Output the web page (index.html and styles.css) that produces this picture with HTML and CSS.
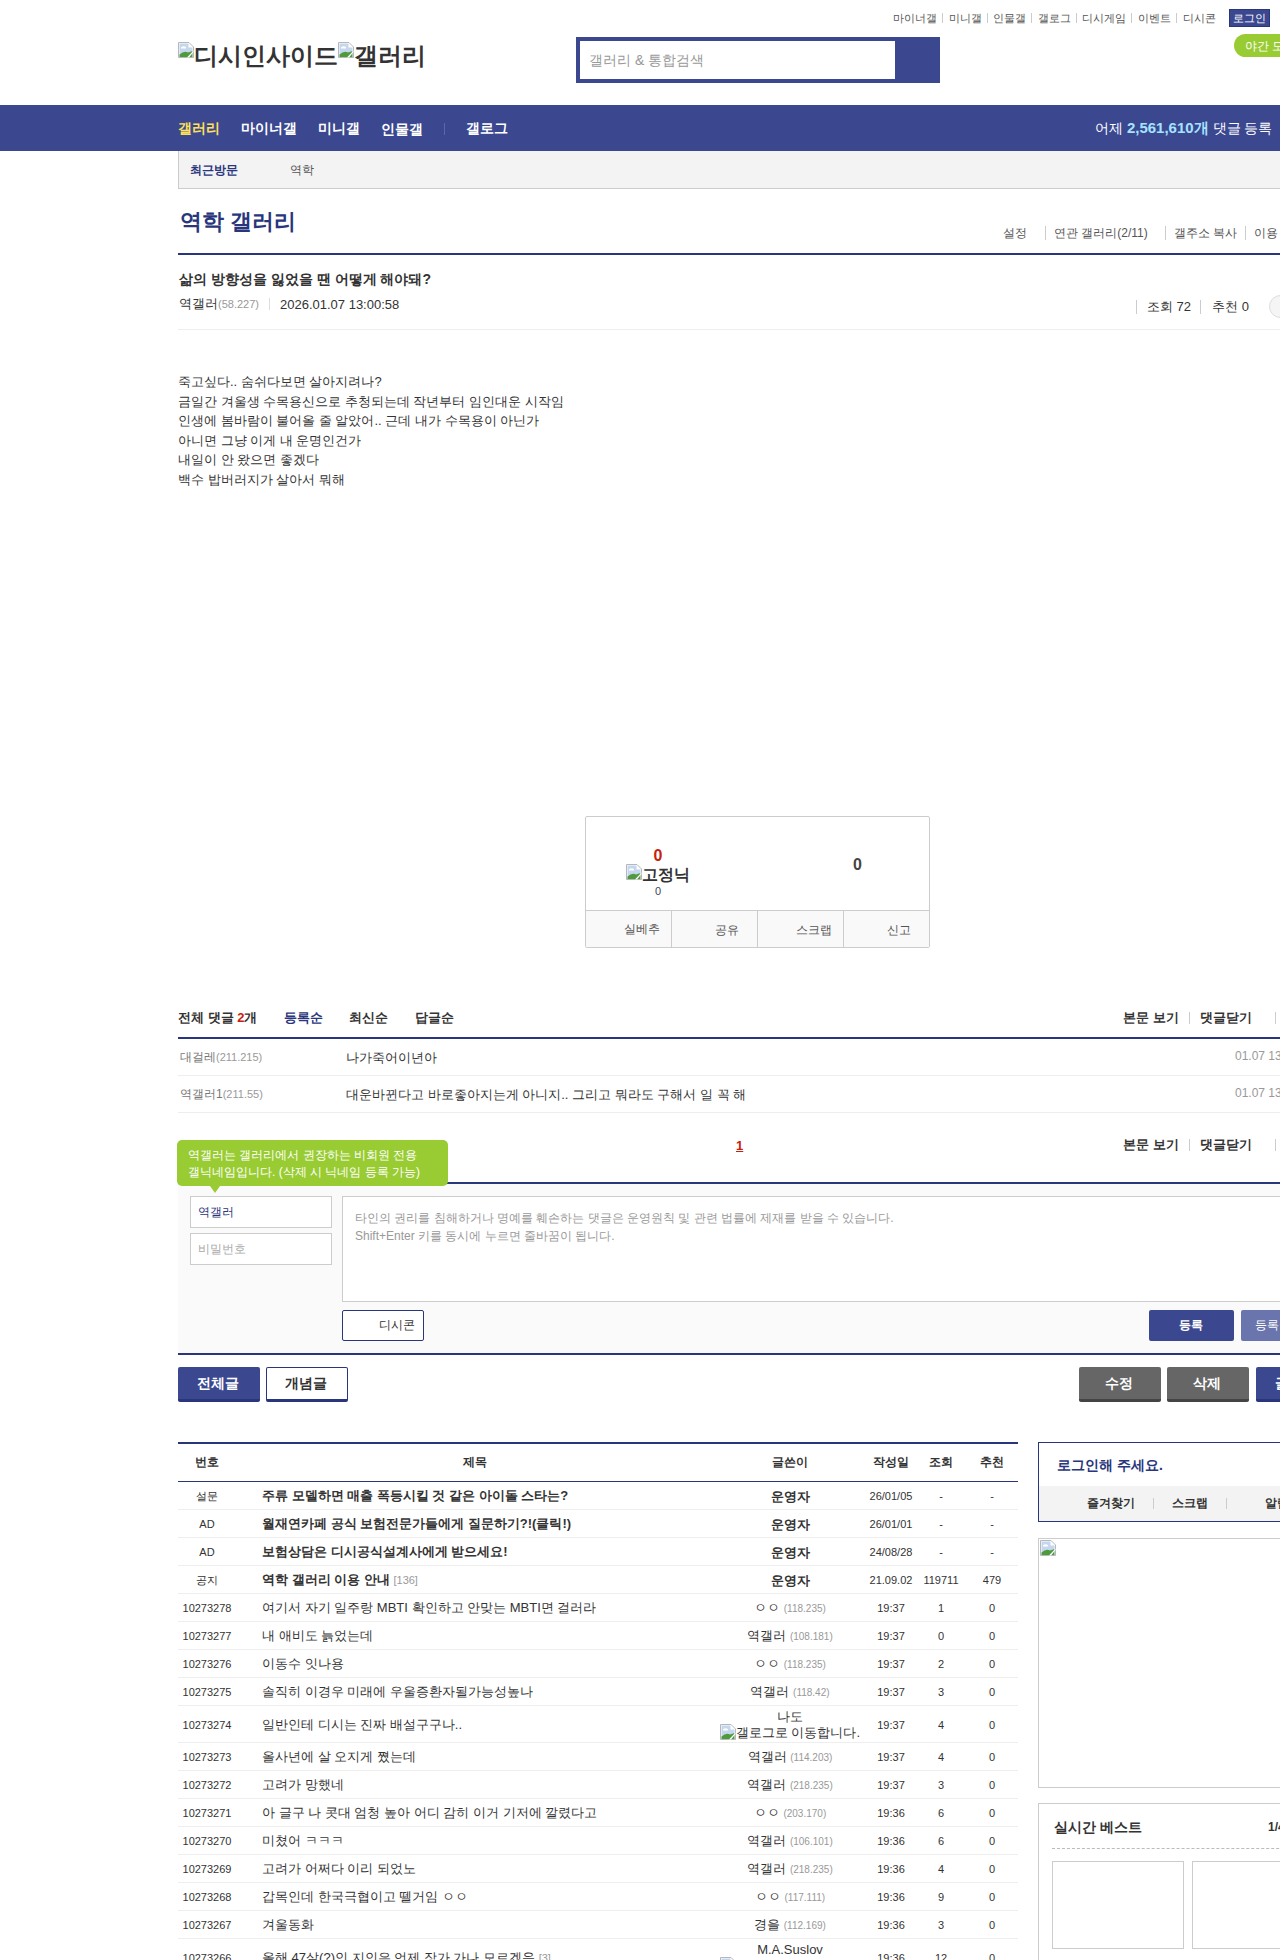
FILE: index.html
```html
<!DOCTYPE html>
<html lang="ko">
<head>
<meta charset="utf-8">
<title>역학 갤러리</title>
<link rel="stylesheet" href="styles.css">
</head>
<body>
<svg class="defs" width="0" height="0"><defs><symbol id="broken" viewBox="0 0 16 16"><path d="M.5.5H11L15.5 5V15.5H.5Z" fill="#fff" stroke="#b4b8bd"/><path d="M1.5 1.5H10.5V5.5H14.5V9L8 15H1.5Z" fill="#c5d6ef"/><path d="M1.5 15V12.5Q6 8.5 10 10.5L14.5 9V15Z" fill="#4f9b3c"/><path d="M9 15.5 15.5 8.5V10L11 15.5Z" fill="#fff"/><path d="M3 5.5Q5 3.5 8 5V6.5H3Z" fill="#fff"/></symbol></defs></svg>
<div class="page">
  <header class="top wrap">
    <div class="logo"><svg class="bk"><use href="#broken"/></svg>디시인사이드<svg class="bk"><use href="#broken"/></svg>갤러리</div>
    <div class="search"><div class="search-in">갤러리 &amp; 통합검색</div></div>
    <div class="top-right">
      <nav class="toplinks"><span>마이너갤</span><span>미니갤</span><span>인물갤</span><span>갤로그</span><span>디시게임</span><span>이벤트</span><span>디시콘</span><b class="login">로그인</b></nav>
      <div class="night">야간 모드</div>
    </div>
  </header>
  <div class="gnb">
    <div class="wrap gnb-in">
      <span class="on">갤러리</span><span>마이너갤</span><span>미니갤</span><span class="ls">인물갤</span><span>갤로그</span>
      <div class="gnb-right">어제 <b>2,561,610개</b> 댓글 등록</div>
    </div>
  </div>
  <main class="wrap">
    <div class="recent"><b>최근방문</b><span>역학</span></div>
    <div class="gall-head">
      <h1>역학 갤러리</h1>
      <div class="gall-links"><span class="g1">설정</span><span class="g2">연관 갤러리(2/11)</span><span class="g3">갤주소 복사</span><span class="g4">이용 안내</span></div>
    </div>
    <div class="post-head">
      <h2>삶의 방향성을 잃었을 땐 어떻게 해야돼?</h2>
      <div class="meta">
        <span class="who">역갤러<i>(58.227)</i></span><span class="date">2026.01.07 13:00:58</span>
        <div class="meta-r"><span>조회 72</span><span>추천 0</span><em class="round"></em></div>
      </div>
    </div>
    <article class="body">
      <p>죽고싶다.. 숨쉬다보면 살아지려나?</p>
      <p>금일간 겨울생 수목용신으로 추청되는데 작년부터 임인대운 시작임</p>
      <p>인생에 봄바람이 불어올 줄 알았어.. 근데 내가 수목용이 아닌가</p>
      <p>아니면 그냥 이게 내 운명인건가</p>
      <p>내일이 안 왔으면 좋겠다</p>
      <p>백수 밥버러지가 살아서 뭐해</p>
    </article>
    <section class="vote">
      <div class="vote-top">
        <div class="up"><strong>0</strong><div class="nick"><svg class="bk"><use href="#broken"/></svg>고정닉</div><small>0</small></div>
        <div class="down">0</div>
      </div>
      <div class="vote-btm"><span class="v1 v0">실베추</span><span class="v2">공유</span><span class="v1">스크랩</span><span class="v2">신고</span></div>
    </section>
    <div class="cmt-head">
      <div class="cmt-tabs"><b>전체 댓글 <u>2</u>개</b><b class="act">등록순</b><b>최신순</b><b>답글순</b></div>
      <div class="cmt-tools"><b>본문 보기</b><b>댓글닫기</b><b>새로고침</b></div>
    </div>
    <div class="cmt"><span class="cn">대걸레<i>(211.215)</i></span><span class="ct">나가죽어이년아</span><span class="cd">01.07 13:05:11</span></div>
    <div class="cmt"><span class="cn">역갤러1<i>(211.55)</i></span><span class="ct">대운바뀐다고 바로좋아지는게 아니지.. 그리고 뭐라도 구해서 일 꼭 해</span><span class="cd">01.07 13:08:42</span></div>
    <div class="cmt-page">
      <div class="tip">역갤러는 갤러리에서 권장하는 비회원 전용<br>갤닉네임입니다. (삭제 시 닉네임 등록 가능)</div>
      <a class="pg">1</a>
      <div class="cmt-tools"><b>본문 보기</b><b>댓글닫기</b><b>새로고침</b></div>
    </div>
    <section class="form">
      <div class="ids"><div class="inp dark">역갤러</div><div class="inp">비밀번호</div></div>
      <div class="form-main">
        <div class="ta">타인의 권리를 침해하거나 명예를 훼손하는 댓글은 운영원칙 및 관련 법률에 제재를 받을 수 있습니다.<br>Shift+Enter 키를 동시에 누르면 줄바꿈이 됩니다.</div>
        <div class="form-btns"><span class="dc">디시콘</span><span class="sub">등록</span><span class="sub lite">등록+추천</span></div>
      </div>
    </section>
    <div class="bar">
      <span class="btn navy">전체글</span><span class="btn line">개념글</span>
      <span class="btn grey push">수정</span><span class="btn grey">삭제</span><span class="btn navy write">글쓰기</span>
    </div>
    <div class="cols">
      <table class="list">
        <colgroup><col class="c1"><col class="c2"><col class="c3"><col class="c4"><col class="c5"><col class="c6"></colgroup>
        <thead><tr><th>번호</th><th>제목</th><th>글쓴이</th><th>작성일</th><th>조회</th><th>추천</th></tr></thead>
        <tbody>
          <tr class="hot"><td>설문</td><td>주류 모델하면 매출 폭등시킬 것 같은 아이돌 스타는?</td><td>운영자</td><td>26/01/05</td><td>-</td><td>-</td></tr>
          <tr class="hot"><td>AD</td><td>월재연카페 공식 보험전문가들에게 질문하기?!(클릭!)</td><td>운영자</td><td>26/01/01</td><td>-</td><td>-</td></tr>
          <tr class="hot"><td>AD</td><td>보험상담은 디시공식설계사에게 받으세요!</td><td>운영자</td><td>24/08/28</td><td>-</td><td>-</td></tr>
          <tr class="hot"><td>공지</td><td>역학 갤러리 이용 안내 <i>[136]</i></td><td>운영자</td><td>21.09.02</td><td>119711</td><td>479</td></tr>
          <tr><td>10273278</td><td>여기서 자기 일주랑 MBTI 확인하고 안맞는 MBTI면 걸러라</td><td>ㅇㅇ <i>(118.235)</i></td><td>19:37</td><td>1</td><td>0</td></tr>
          <tr><td>10273277</td><td>내 애비도 늙었는데</td><td>역갤러 <i>(108.181)</i></td><td>19:37</td><td>0</td><td>0</td></tr>
          <tr><td>10273276</td><td>이동수 잇나용</td><td>ㅇㅇ <i>(118.235)</i></td><td>19:37</td><td>2</td><td>0</td></tr>
          <tr><td>10273275</td><td>솔직히 이경우 미래에 우울증환자될가능성높나</td><td>역갤러 <i>(118.42)</i></td><td>19:37</td><td>3</td><td>0</td></tr>
          <tr class="tall"><td>10273274</td><td>일반인테 디시는 진짜 배설구구나..</td><td>나도<br><svg class="bk"><use href="#broken"/></svg>갤로그로 이동합니다.</td><td>19:37</td><td>4</td><td>0</td></tr>
          <tr><td>10273273</td><td>올사년에 살 오지게 쪘는데</td><td>역갤러 <i>(114.203)</i></td><td>19:37</td><td>4</td><td>0</td></tr>
          <tr><td>10273272</td><td>고려가 망했네</td><td>역갤러 <i>(218.235)</i></td><td>19:37</td><td>3</td><td>0</td></tr>
          <tr><td>10273271</td><td>아 글구 나 콧대 엄청 높아 어디 감히 이거 기저에 깔렸다고</td><td>ㅇㅇ <i>(203.170)</i></td><td>19:36</td><td>6</td><td>0</td></tr>
          <tr><td>10273270</td><td>미쳤어 ㅋㅋㅋ</td><td>역갤러 <i>(106.101)</i></td><td>19:36</td><td>6</td><td>0</td></tr>
          <tr><td>10273269</td><td>고려가 어쩌다 이리 되었노</td><td>역갤러 <i>(218.235)</i></td><td>19:36</td><td>4</td><td>0</td></tr>
          <tr><td>10273268</td><td>갑목인데 한국극협이고 뗄거임 ㅇㅇ</td><td>ㅇㅇ <i>(117.111)</i></td><td>19:36</td><td>9</td><td>0</td></tr>
          <tr><td>10273267</td><td>겨울동화</td><td>경을 <i>(112.169)</i></td><td>19:36</td><td>3</td><td>0</td></tr>
          <tr class="tall"><td>10273266</td><td>올해 47살(?)인 지인은 언제 장가 가나 모르겠음 <i>[3]</i></td><td>M.A.Suslov<br><svg class="bk"><use href="#broken"/></svg>갤로그로 이동합니다.</td><td>19:36</td><td>12</td><td>0</td></tr>
        </tbody>
      </table>
      <aside class="side">
        <div class="loginbox"><div class="lb-t">로그인해 주세요.</div><div class="lb-b"><span>즐겨찾기</span><span>스크랩</span><span>알림</span></div></div>
        <div class="adbox"><svg class="bk"><use href="#broken"/></svg></div>
        <div class="best">
          <div class="best-h"><b>실시간 베스트</b><b class="cnt">1/4</b></div>
          <div class="thumbs"><div class="th"></div><div class="th"></div></div>
        </div>
      </aside>
    </div>
  </main>
</div>
</body>
</html>
```
FILE: styles.css
```css
html, body { margin: 0; padding: 0; background: #fff; }
body { width: 1280px; height: 1960px; overflow: hidden; font-family: "Liberation Sans", sans-serif; font-size: 12px; color: #333; }
p, h1, h2 { margin: 0; }
i, em { font-style: normal; }
.defs { position: absolute; }
.page { width: 1280px; height: 1960px; overflow: hidden; }
.wrap { width: 1160px; margin-left: 178px; }
.bk { width: 16px; height: 16px; vertical-align: baseline; flex: none; }

.top { height: 105px; display: flex; position: relative; }
.logo { font-size: 24px; font-weight: 700; line-height: 30px; color: #333; padding-top: 41px; width: 398px; flex: none; white-space: nowrap; }
.logo .bk { vertical-align: 6px; }
.search { margin-top: 37px; width: 364px; height: 46px; background: #3b4890; flex: none; box-sizing: border-box; padding: 4px 45px 4px 4px; }
.search-in { height: 38px; background: #fff; line-height: 38px; padding-left: 9px; font-size: 14px; color: #999; }
.top-right { position: absolute; left: 700px; top: 9px; width: 460px; }
.toplinks { display: flex; align-items: center; height: 18px; font-size: 11px; color: #555; padding-left: 15px; white-space: nowrap; }
.toplinks span { padding-right: 5px; margin-right: 5.6px; border-right: 1px solid #ccc; line-height: 10px; }
.toplinks span:nth-child(7) { border: 0; padding-right: 0; margin-right: 13px; }
.login { background: #3b4890; color: #fff; font-weight: 400; width: 41px; height: 18px; line-height: 16px; text-align: center; flex: none; border: 1px solid #29367c; box-sizing: border-box; }
.night { position: absolute; left: 356px; top: 25px; width: 100px; height: 23px; line-height: 24px; border-radius: 12px; background: #9c3; color: #fff; padding-left: 11px; white-space: nowrap; }

.gnb { height: 46px; background: #3b4890; width: 1280px; }
.gnb-in { display: flex; align-items: center; height: 45px; padding-top: 1px; font-size: 14px; font-weight: 700; color: #fff; gap: 21px; white-space: nowrap; position: relative; }
.gnb-in .on { color: #ffe05a; }
.gnb-in .ls { padding-right: 21px; border-right: 1px solid #5b67a8; line-height: 12px; }
.gnb-right { position: absolute; left: 917px; font-weight: 400; font-size: 14px; }
.gnb-right b { color: #a6e3ff; font-size: 15px; }

.recent { height: 37px; line-height: 38px; background: #f3f3f3; border-left: 1px solid #ccc; border-bottom: 1px solid #ccc; display: flex; padding-left: 11px; font-size: 12px; }
.recent b { color: #29367c; width: 100px; }
.recent span { color: #555; }

.gall-head { height: 64px; border-bottom: 2px solid #29367c; position: relative; }
.gall-head h1 { font-size: 22px; font-weight: 700; line-height: 36px; padding: 15px 0 0 2px; color: #29367c; }
.gall-links { position: absolute; left: 825px; top: 37px; font-size: 12px; color: #555; white-space: nowrap; display: flex; }
.gall-links span { line-height: 14px; }
.g2, .g3, .g4 { border-left: 1px solid #ccc; padding-left: 8px; }
.g1 { margin-right: 18px; }
.g2 { margin-right: 17px; }
.g3 { margin-right: 8px; }

.post-head { height: 75px; border-bottom: 1px solid #eee; padding-left: 1px; box-sizing: border-box; }
.post-head h2 { font-size: 14px; font-weight: 700; line-height: 20px; padding-top: 14px; color: #333; }
.meta { display: flex; align-items: center; height: 20px; margin-top: 5px; position: relative; font-size: 13px; }
.who { padding-right: 10px; margin-right: 10px; border-right: 1px solid #ddd; line-height: 12px; }
.who i { color: #999; font-size: 11px; }
.meta-r { position: absolute; left: 957px; top: 1px; display: flex; align-items: center; white-space: nowrap; }
.meta-r span { border-left: 1px solid #ccc; padding-left: 10px; margin-right: 9px; line-height: 14px; }
.meta-r span:nth-child(2) { padding-left: 11px; }
.round { width: 30px; height: 23px; margin-left: 11px; box-sizing: border-box; border: 1px solid #ddd; border-radius: 12px; background: #f5f5f5; flex: none; }

.body { height: 486px; padding-top: 42px; box-sizing: border-box; font-size: 13px; line-height: 19.6px; color: #333; }

.vote { width: 345px; height: 132px; margin-left: 407px; box-sizing: border-box; border: 1px solid #ccc; border-radius: 2px; display: flex; flex-direction: column; }
.vote-top { height: 93px; flex: none; display: flex; position: relative; }
.up { text-align: center; padding-top: 32px; box-sizing: border-box; width: 144px; white-space: nowrap; }
.up strong { display: block; color: #c9200e; font-size: 16px; line-height: 14px; }
.nick { font-size: 16px; line-height: 20px; font-weight: 700; color: #333; margin-top: 1px; }
.up small { display: block; font-size: 11px; line-height: 14px; color: #445; margin-top: -1px; }
.down { position: absolute; left: 267px; top: 39px; font-size: 16px; font-weight: 700; color: #444; }
.vote-btm { display: flex; background: #f9f9f9; border-top: 1px solid #ccc; box-sizing: border-box; height: 37px; }
.vote-btm span { flex: none; width: 86px; box-sizing: border-box; border-left: 1px solid #ccc; text-align: right; line-height: 39px; color: #555; }
.vote-btm span:first-child { border-left: 0; width: 85px; line-height: 37px; }
.v1 { padding-right: 11px; }
.v2 { padding-right: 18px; }

.cmt-head { margin-top: 59px; height: 30px; display: flex; border-bottom: 2px solid #29367c; font-size: 13px; }
.cmt-tabs { display: flex; gap: 26.5px; height: 22px; line-height: 22px; width: 945px; flex: none; }
.cmt-tabs b { color: #333; font-size: 13px; white-space: nowrap; }
.cmt-tabs u { color: #c9200e; text-decoration: none; }
.cmt-tabs .act { color: #29367c; }
.cmt-tools { display: flex; align-items: center; white-space: nowrap; height: 22px; flex: none; }
.cmt-tools b { font-size: 13px; line-height: 12px; padding-right: 10px; margin-right: 10px; border-right: 1px solid #ccc; }
.cmt-tools b:nth-child(2) { padding-right: 23px; }
.cmt-tools b:last-child { border: 0; padding: 0; margin: 0; }
.cmt { height: 36px; border-bottom: 1px solid #eee; display: flex; align-items: center; position: relative; }
.cn { width: 168px; padding-left: 2px; font-size: 12px; color: #777; flex: none; box-sizing: border-box; }
.cn i { font-size: 11px; color: #999; }
.ct { font-size: 13px; color: #333; padding-top: 1px; }
.cd { position: absolute; left: 1057px; top: 10px; font-size: 12px; color: #999; white-space: nowrap; }

.cmt-page { height: 71px; position: relative; border-bottom: 2px solid #29367c; box-sizing: border-box; display: flex; padding: 21px 0 0 945px; }
.tip { position: absolute; left: -1px; top: 27px; width: 271px; height: 46px; box-sizing: border-box; background: #9c3; color: #fff; border-radius: 5px; padding: 7px 11px; line-height: 17px; font-size: 12px; z-index: 2; white-space: nowrap; }
.tip::after { content: ""; position: absolute; left: 33px; top: 46px; border-left: 5px solid transparent; border-right: 5px solid transparent; border-top: 7px solid #9c3; }
.pg { position: absolute; left: 558px; top: 25px; font-weight: 700; font-size: 13px; color: #c9200e; text-decoration: underline; }

.form { height: 171px; background: #fafafa; border-bottom: 2px solid #29367c; display: flex; padding: 12px 0 0 12px; box-sizing: border-box; }
.ids { width: 142px; margin-right: 10px; flex: none; }
.inp { height: 32px; box-sizing: border-box; border: 1px solid #ccc; background: #fff; line-height: 30px; padding-left: 7px; margin-bottom: 5px; font-size: 12px; color: #aaa; }
.inp.dark { color: #29367c; }
.form-main { flex: 1; }
.ta { height: 106px; box-sizing: border-box; border: 1px solid #ccc; background: #fff; padding: 12px; line-height: 18px; font-size: 12px; color: #999; white-space: nowrap; width: 996px; }
.form-btns { display: flex; margin-top: 8px; height: 32px; position: relative; }
.dc { width: 82px; height: 31px; line-height: 29px; box-sizing: border-box; border: 1px solid #29367c; border-radius: 2px; background: #fff; text-align: right; padding-right: 8px; color: #333; }
.sub { position: absolute; left: 807px; width: 85px; height: 31px; line-height: 31px; text-align: center; background: #3b4890; color: #fff; font-weight: 700; border-radius: 2px; padding-right: 1px; box-sizing: border-box; }
.sub.lite { left: 899px; background: #6a75ad; font-weight: 400; }

.bar { display: flex; margin-top: 12px; height: 35px; gap: 6px; }
.btn { width: 82px; height: 35px; box-sizing: border-box; line-height: 32px; text-align: center; font-size: 14px; font-weight: 700; border-radius: 2px; padding-right: 2px; flex: none; }
.navy { background: #3b4890; color: #fff; border-bottom: 3px solid #29367c; }
.line { background: #fff; color: #333; border: 1px solid #29367c; border-bottom: 3px solid #29367c; line-height: 30px; }
.grey { background: #666; color: #fff; border-bottom: 3px solid #444; }
.push { margin-left: 725px; }
.write { margin-left: 1px; }

.cols { display: flex; margin-top: 40px; align-items: flex-start; }
.list { width: 840px; flex: none; table-layout: fixed; border-collapse: collapse; border-top: 2px solid #29367c; }
.c1 { width: 58px; } .c2 { width: 478px; } .c3 { width: 152px; } .c4 { width: 50px; } .c5 { width: 50px; } .c6 { width: 52px; }
.list th { height: 37px; padding: 0; font-size: 12px; font-weight: 700; color: #333; border-bottom: 1px solid #29367c; }
.list td { height: 26px; padding: 1px 0 0; text-align: center; font-size: 11px; color: #333; border-bottom: 1px solid #eee; white-space: nowrap; }
.list td:nth-child(2) { text-align: left; padding-left: 26px; font-size: 13px; overflow: hidden; }
.list td:nth-child(3) { font-size: 13px; line-height: 15px; }
.list td:nth-child(3) .bk { vertical-align: -3px; }
.list td i { font-size: 10px; color: #999; }
.list td:nth-child(2) i { font-size: 11px; }
.list .hot td:nth-child(2), .list .hot td:nth-child(3) { font-weight: 700; }
.list .hot i { font-weight: 400; }
.list .tall td { height: 35px; }

.side { margin-left: 20px; width: 300px; flex: none; }
.loginbox { height: 80px; box-sizing: border-box; border: 1px solid #29367c; }
.lb-t { height: 43px; line-height: 44px; padding-left: 18px; font-size: 14px; font-weight: 700; color: #29367c; }
.lb-b { height: 35px; background: #f3f3f3; display: flex; align-items: center; padding-left: 48px; font-size: 12px; font-weight: 700; color: #333; }
.lb-b span { white-space: nowrap; line-height: 11px; padding-right: 18px; margin-right: 18px; border-right: 1px solid #ccc; }
.lb-b span:last-child { border: 0; padding: 0; margin: 0 0 0 20px; }
.adbox { height: 250px; margin-top: 16px; box-sizing: border-box; border: 1px solid #ccc; padding: 1px 0 0 1px; }
.best { margin-top: 15px; height: 200px; box-sizing: border-box; border: 1px solid #ccc; padding: 0 13px; }
.best-h { height: 44px; border-bottom: 1px dashed #bbb; line-height: 46px; position: relative; padding-left: 2px; }
.best-h b { font-size: 14px; }
.best-h .cnt { position: absolute; left: 216px; font-size: 12px; }
.thumbs { display: flex; gap: 8px; margin-top: 12px; }
.th { width: 132px; height: 88px; box-sizing: border-box; border: 1px solid #ccc; flex: none; }
```
